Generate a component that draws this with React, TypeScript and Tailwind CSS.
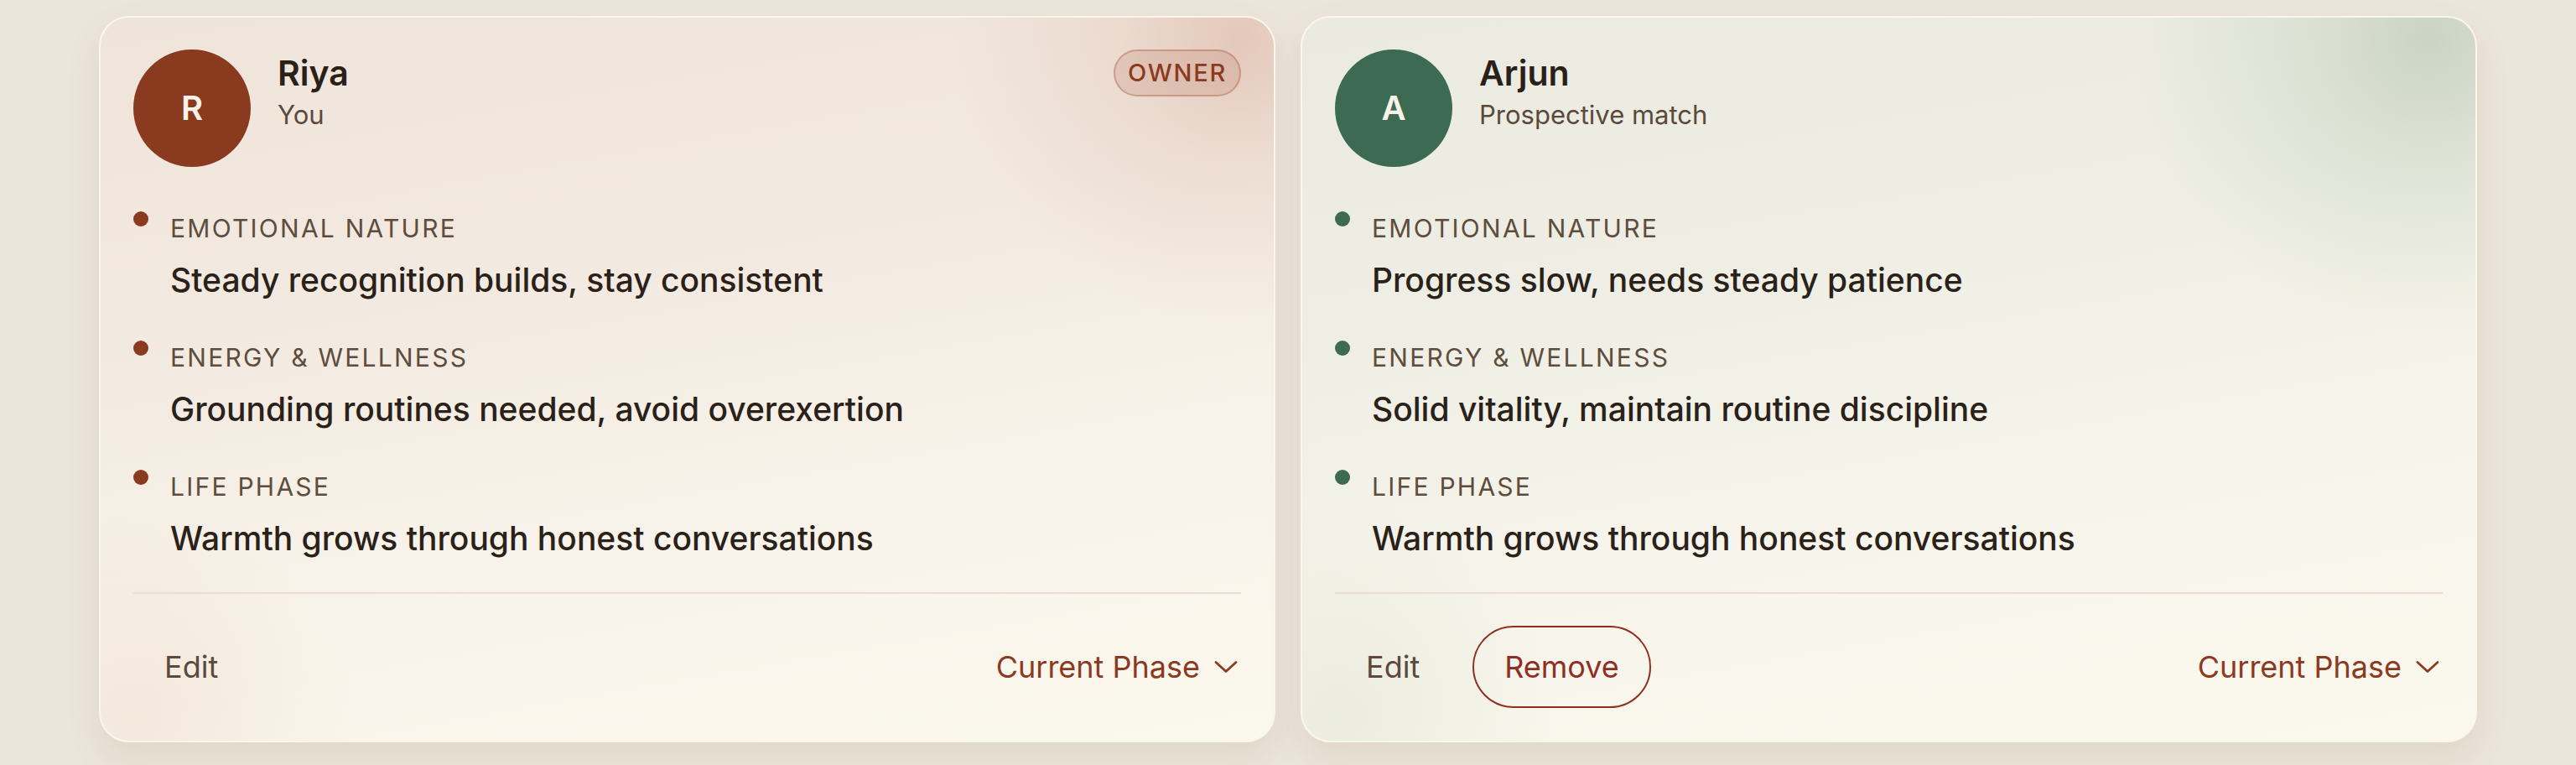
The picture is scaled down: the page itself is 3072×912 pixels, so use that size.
import React from 'react';

type Trait = { label: string; value: string };

interface PersonCardProps {
  initial: string;
  name: string;
  subtitle: string;
  tone: 'rust' | 'green';
  traits: Trait[];
  owner?: boolean;
  removable?: boolean;
}

function ChevronDown() {
  return (
    <svg width="28" height="16" viewBox="0 0 28 16" fill="none" className="shrink-0">
      <path d="M2 2.5L14 13.5L26 2.5" stroke="currentColor" strokeWidth="2.8" strokeLinecap="round" strokeLinejoin="round" />
    </svg>
  );
}

function PersonCard({ initial, name, subtitle, tone, traits, owner, removable }: PersonCardProps) {
  const isRust = tone === 'rust';

  // soft glow tucked in the top-right corner, tinted by the person's tone
  const cardBg = isRust
    ? 'bg-[radial-gradient(circle_at_97%_3%,rgba(205,150,128,0.38)_0px,rgba(205,150,128,0.16)_140px,transparent_340px),radial-gradient(circle_at_3%_97%,rgba(215,165,145,0.16)_0px,transparent_260px),linear-gradient(170deg,#efe4da_0%,#f2e9e0_35%,#f8f3ea_65%,#fbf8ee_100%)]'
    : 'bg-[radial-gradient(circle_at_96%_3%,rgba(150,175,150,0.40)_0px,rgba(150,175,150,0.18)_150px,transparent_350px),radial-gradient(circle_at_3%_97%,rgba(165,180,160,0.16)_0px,transparent_260px),linear-gradient(170deg,#eaeae0_0%,#eeeee4_35%,#f7f5eb_65%,#fbf8ee_100%)]';

  return (
    <div
      className={`${cardBg} border-2 border-[#fbf6ec] rounded-[36px] px-[39px] pt-[38px] pb-[39px] flex flex-col shadow-[0_18px_40px_rgba(120,90,60,0.10)]`}
    >
      {/* header */}
      <div className="flex items-start justify-between">
        <div className="flex items-start gap-[32px]">
          <div
            className={`w-[140px] h-[140px] rounded-full flex items-center justify-center text-[40px] font-semibold text-[#fbf3e8] ${
              isRust ? 'bg-[#8a3a1f]' : 'bg-[#3c6a52]'
            }`}
          >
            {initial}
          </div>
          <div className="pt-[4px]">
            <p className="text-[41px] leading-[48px] font-semibold text-[#2a2018]">{name}</p>
            <p className="text-[31px] leading-[40px] mt-[6px] text-[#5b4a3b]">{subtitle}</p>
          </div>
        </div>
        {owner && (
          <span className="h-[56px] px-[15px] flex items-center rounded-full border-2 border-[rgba(150,70,45,0.32)] bg-[rgba(165,85,60,0.16)] text-[29px] font-medium tracking-[0.06em] text-[#8b3a1f]">
            OWNER
          </span>
        )}
      </div>

      {/* traits */}
      <div className="mt-[52px] flex flex-col gap-[44px]">
        {traits.map((t) => (
          <div key={t.label} className="flex items-start gap-[26px]">
            <span
              className={`w-[18px] h-[18px] rounded-full shrink-0 mt-[1px] ${isRust ? 'bg-[#8a3a1f]' : 'bg-[#3c6a52]'}`}
            ></span>
            <div>
              <p className="text-[30px] leading-[42px] tracking-[0.075em] uppercase text-[#5e4d3d]">{t.label}</p>
              <p className="text-[39px] leading-[54px] mt-[14px] font-medium text-[#2a2119]">{t.value}</p>
            </div>
          </div>
        ))}
      </div>

      <div className="h-[2px] bg-[#ecdcd2] mt-[37px]"></div>

      {/* footer actions */}
      <div className="pt-[38px] flex items-center justify-between">
        <div className="flex items-center gap-[26px]">
          <button className="h-[98px] px-[37px] text-[36px] text-[#5b4a3b]">Edit</button>
          {removable && (
            <button className="h-[98px] px-[36px] rounded-full border-[2.5px] border-[#8e2f22] text-[36px] text-[#8e2f22]">
              Remove
            </button>
          )}
        </div>
        <button className="h-[98px] pr-[4px] flex items-center gap-[17px] text-[36px] text-[#8b3a1f]">
          <span>Current Phase</span>
          <ChevronDown />
        </button>
      </div>
    </div>
  );
}

export default function App() {
  return (
    <div className="min-h-[912px] bg-[#ece5da] px-[118px] pt-[19px] font-['Inter',sans-serif]">
      <div className="grid grid-cols-2 gap-[30px]">
        <PersonCard
          initial="R"
          name="Riya"
          subtitle="You"
          tone="rust"
          owner
          traits={[
            { label: 'Emotional Nature', value: 'Steady recognition builds, stay consistent' },
            { label: 'Energy & Wellness', value: 'Grounding routines needed, avoid overexertion' },
            { label: 'Life Phase', value: 'Warmth grows through honest conversations' },
          ]}
        />
        <PersonCard
          initial="A"
          name="Arjun"
          subtitle="Prospective match"
          tone="green"
          removable
          traits={[
            { label: 'Emotional Nature', value: 'Progress slow, needs steady patience' },
            { label: 'Energy & Wellness', value: 'Solid vitality, maintain routine discipline' },
            { label: 'Life Phase', value: 'Warmth grows through honest conversations' },
          ]}
        />
      </div>
    </div>
  );
}
